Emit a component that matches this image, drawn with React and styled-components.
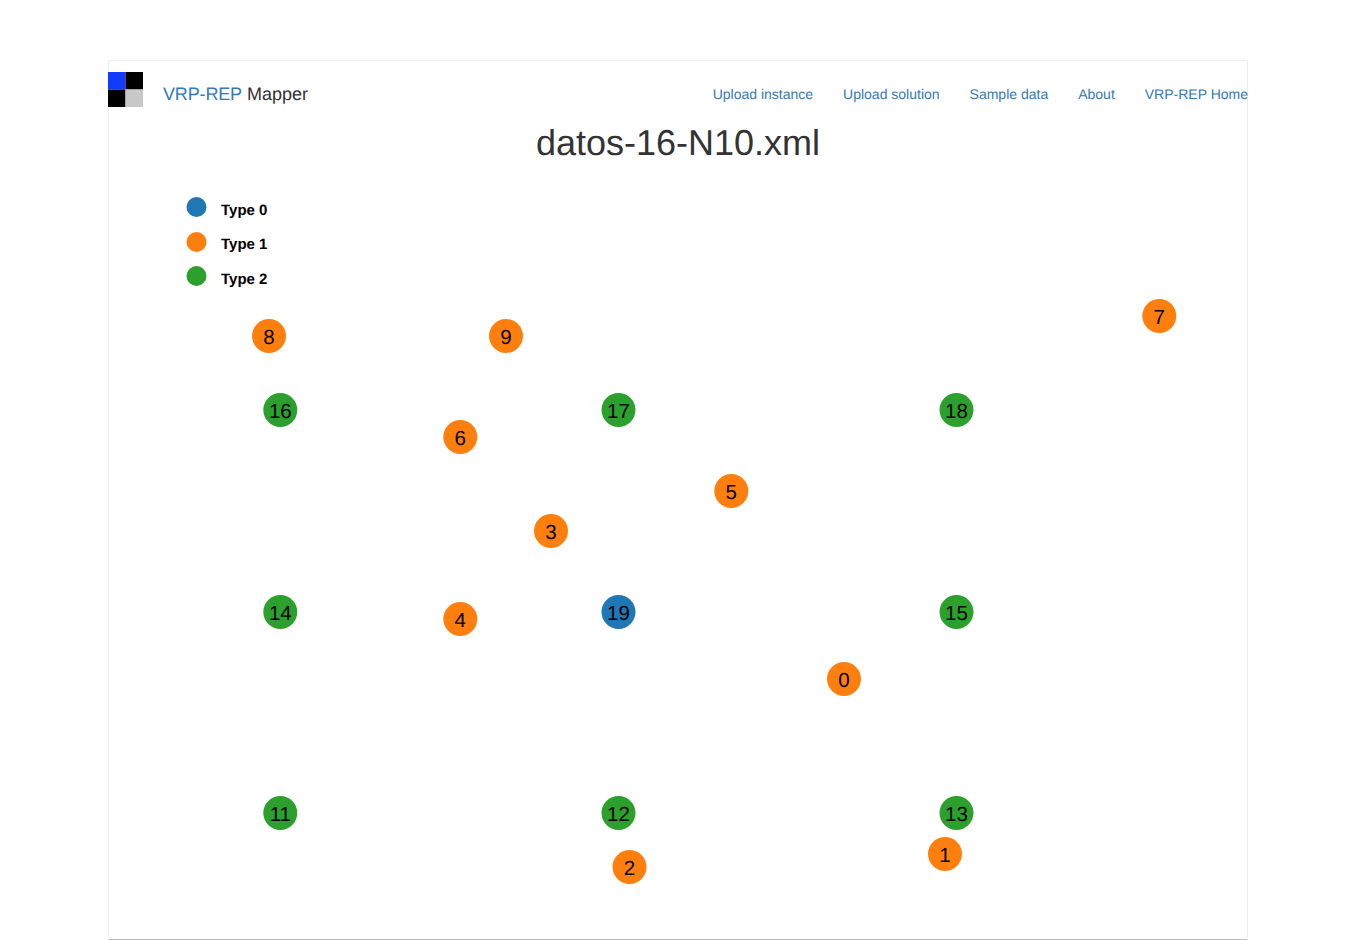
import React from 'react';
import styled, { createGlobalStyle } from 'styled-components';

const COLORS = ['#1f77b4', '#ff7f0e', '#2ca02c'];

const NAV_LINKS = ['Upload instance', 'Upload solution', 'Sample data', 'About', 'VRP-REP Home'];

// x, y are relative to the map canvas, which starts at the frame's left edge, below the title
const NODES = [
  { id: 0, type: 1, x: 736, y: 509 },
  { id: 1, type: 1, x: 837, y: 684 },
  { id: 2, type: 1, x: 521.5, y: 697 },
  { id: 3, type: 1, x: 443, y: 361 },
  { id: 4, type: 1, x: 352.3, y: 449 },
  { id: 5, type: 1, x: 623.3, y: 321 },
  { id: 6, type: 1, x: 352.3, y: 267 },
  { id: 7, type: 1, x: 1051.3, y: 146 },
  { id: 8, type: 1, x: 161, y: 166 },
  { id: 9, type: 1, x: 398, y: 166 },
  { id: 11, type: 2, x: 172.3, y: 643 },
  { id: 12, type: 2, x: 510.5, y: 643 },
  { id: 13, type: 2, x: 848.5, y: 643 },
  { id: 14, type: 2, x: 172.3, y: 442 },
  { id: 15, type: 2, x: 848.5, y: 442 },
  { id: 16, type: 2, x: 172.3, y: 240 },
  { id: 17, type: 2, x: 510.5, y: 240 },
  { id: 18, type: 2, x: 848.5, y: 240 },
  { id: 19, type: 0, x: 510.5, y: 442 },
];

const LEGEND = [
  { type: 0, y: 37, labelY: 45 },
  { type: 1, y: 72, labelY: 79 },
  { type: 2, y: 106, labelY: 114 },
];

const GlobalStyle = createGlobalStyle`
  html, body {
    margin: 0;
    padding: 0;
    background: #fff;
  }
  body {
    font-family: "Helvetica Neue", Helvetica, Arial, "Liberation Sans", sans-serif;
    font-size: 14px;
    line-height: 20px;
    color: #333;
    text-rendering: geometricPrecision;
  }
`;

const Frame = styled.div`
  width: 1140px;
  height: 880px;
  margin: 60px auto 0;
  box-shadow: inset 1px 1px 0 #eee, inset -1px 0 0 #eee, inset 0 -1px 0 #bbb;
`;

const Navbar = styled.nav`
  display: flex;
  align-items: flex-start;
  justify-content: space-between;
  height: 51px;
  padding-top: 12px;
`;

const Brand = styled.div`
  display: flex;
  align-items: center;
  gap: 20px;
  height: 42px;
  margin-top: 1px;
  font-size: 18px;
`;

const Logo = styled.svg`
  display: block;
  width: 35px;
  height: 35px;
  margin-top: -9px;
`;

const BrandLink = styled.a`
  color: #337ab7;
  letter-spacing: -0.15px;
`;

const NavLinks = styled.ul`
  display: flex;
  gap: 30px;
  margin: 1px 0 0;
  padding: 0;
  list-style: none;
  height: 42px;
  align-items: center;
`;

const NavLink = styled.a`
  color: #337ab7;
  text-decoration: none;
`;

const Title = styled.h1`
  margin: 0;
  height: 47px;
  font-size: 36px;
  line-height: 40px;
  font-weight: 500;
  text-align: center;
  color: #333;
  box-sizing: border-box;
`;

const MapCanvas = styled.svg`
  display: block;
  width: 1140px;
  height: 771px;
`;

const LegendLabel = styled.text`
  font-size: 15px;
  font-weight: 700;
  fill: #000;
`;

const NodeLabel = styled.text`
  font-size: 20.5px;
  fill: #000;
  text-anchor: middle;
`;

export default function App() {
  return (
    <>
      <GlobalStyle />
      <Frame>
        <Navbar>
          <Brand>
            <Logo viewBox="0 0 35 35">
              <rect x="0" y="0" width="17.5" height="17.5" fill="#0f3cff" />
              <rect x="17.5" y="0" width="17.5" height="17.5" fill="#000" />
              <rect x="0" y="17.5" width="17.5" height="17.5" fill="#000" />
              <rect x="17.5" y="17.5" width="17.5" height="17.5" fill="#c8c8c8" />
            </Logo>
            <span>
              <BrandLink>VRP-REP</BrandLink> Mapper
            </span>
          </Brand>
          <NavLinks>
            {NAV_LINKS.map(label => (
              <li key={label}>
                <NavLink href="#">{label}</NavLink>
              </li>
            ))}
          </NavLinks>
        </Navbar>
        <Title>datos-16-N10.xml</Title>
        <MapCanvas viewBox="0 0 1140 771">
          {LEGEND.map(({ type, y, labelY }) => (
            <g key={type}>
              <circle cx="88.5" cy={y} r="10" fill={COLORS[type]} />
              <LegendLabel x="113" y={labelY}>Type {type}</LegendLabel>
            </g>
          ))}
          {NODES.map(node => (
            <g key={node.id}>
              <circle cx={node.x} cy={node.y} r="17" fill={COLORS[node.type]} />
              <NodeLabel x={node.x} y={node.y + 8}>{node.id}</NodeLabel>
            </g>
          ))}
        </MapCanvas>
      </Frame>
    </>
  );
}
